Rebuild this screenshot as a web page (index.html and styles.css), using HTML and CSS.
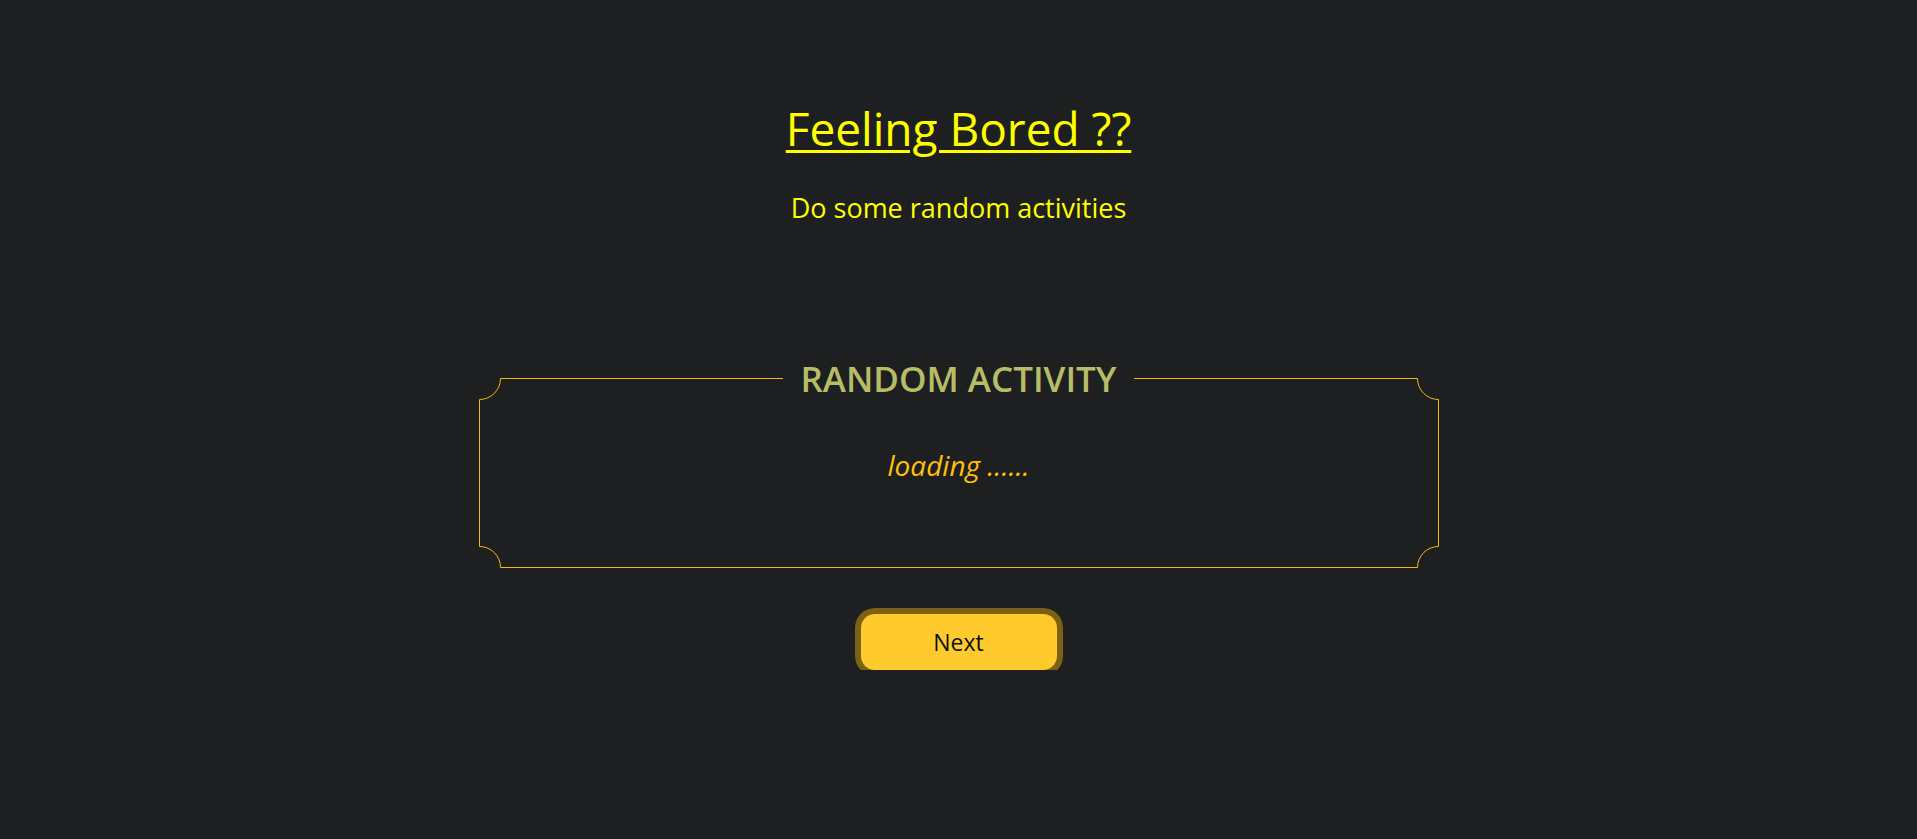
FILE: index.html
```html
<!DOCTYPE html>
<html lang="en">
<head>
<meta charset="utf-8">
<title>Feeling Bored ??</title>
<link rel="stylesheet" href="styles.css">
</head>
<body>
<main class="page">
  <h1 class="title">Feeling Bored ??</h1>
  <p class="subtitle">Do some random activities</p>
  <section class="card">
    <svg class="frame" width="960" height="190" viewBox="0 0 960 190" aria-hidden="true">
      <path d="M21.5,0.5 H938.5 A21,21 0 0 0 959.5,21.5 V168.5 A21,21 0 0 0 938.5,189.5 H21.5 A21,21 0 0 0 0.5,168.5 V21.5 A21,21 0 0 0 21.5,0.5 Z" fill="none" stroke="#f2bb0c" stroke-width="1"/>
    </svg>
    <h2 class="legend">RANDOM ACTIVITY</h2>
    <p class="activity">loading ......</p>
  </section>
  <button class="next" type="button">Next</button>
</main>
</body>
</html>
```
FILE: styles.css
```css
html, body {
  margin: 0;
  padding: 0;
  background: #1e1f21;
}
body {
  font-family: "Open Sans", "Noto Sans", sans-serif;
  color: #ffff00;
}
.page {
  display: flex;
  flex-direction: column;
  align-items: center;
  padding-top: 101px;
  text-align: center;
}
.title {
  margin: 0;
  font-size: 46px;
  font-weight: 400;
  line-height: 1.2;
  text-decoration: underline;
  text-decoration-thickness: 3px;
  text-underline-offset: 4px;
}
.subtitle {
  margin: 32px 0 0;
  font-size: 27px;
  line-height: 1.5;
}
.card {
  position: relative;
  box-sizing: border-box;
  width: 960px;
  height: 190px;
  margin-top: 149px;
  display: flex;
  flex-direction: column;
  align-items: center;
}
.frame {
  position: absolute;
  left: 0;
  top: 0;
  pointer-events: none;
}
.legend {
  position: relative;
  margin: -20px 0 0;
  padding: 0 17px;
  background: #1e1f21;
  color: #b6bd66;
  font-size: 35px;
  font-weight: 600;
  line-height: 1.2;
}
.activity {
  margin: 44px 0 0;
  color: #ffc107;
  font-size: 28px;
  font-style: italic;
  line-height: 1.5;
}
.next {
  margin-top: 46px;
  width: 196px;
  height: 56px;
  border: 0;
  border-radius: 14px;
  background: #ffca2c;
  box-shadow: 0 0 0 6px rgba(217, 164, 6, 0.5);
  color: #111;
  font-family: "Open Sans", "Noto Sans", sans-serif;
  font-size: 23px;
  cursor: pointer;
}
```
